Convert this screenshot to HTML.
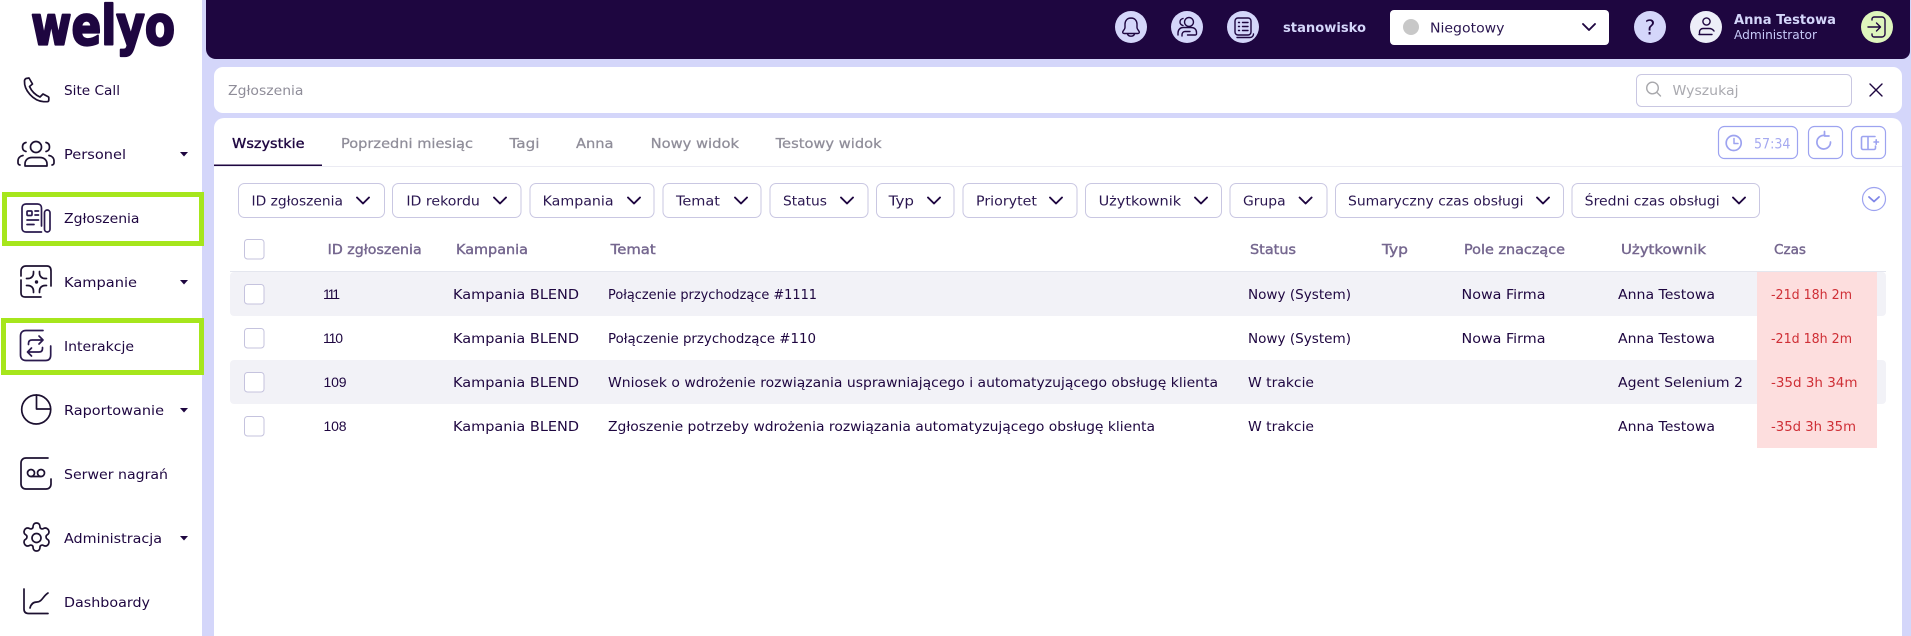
<!DOCTYPE html>
<html lang="pl"><head><meta charset="utf-8"><title>Zgłoszenia</title>
<style>
html,body{margin:0;padding:0;background:#d4d6fa;width:1911px;height:636px;overflow:hidden}
svg{display:block}
text{font-family:"DejaVu Sans","Liberation Sans",sans-serif;font-size:13.5px;fill:#1e0640}
.h{fill:#75678f;stroke:#75678f;stroke-width:.4}
.t{fill:#8f8d99;stroke:#8f8d99;stroke-width:.25}
.f{fill:#2a1650}
.n{fill:#1e0640}
.c{fill:#cf2f36}
.d{font-family:"Liberation Sans",sans-serif;font-size:14px}
.i{fill:none;stroke:#1c1030;stroke-width:1.7;stroke-linecap:round;stroke-linejoin:round}
.ti{fill:none;stroke:#1e0640;stroke-width:1.4;stroke-linecap:round;stroke-linejoin:round}
.chev{fill:none;stroke:#1e0640;stroke-width:1.9;stroke-linecap:round;stroke-linejoin:round}
.bl{fill:none;stroke:#9da3f0;stroke-width:1.3;stroke-linecap:round;stroke-linejoin:round}
.fb{fill:#fff;stroke:#c9c7e2;stroke-width:1}
.cb{fill:#fff;stroke:#c5c3de;stroke-width:1}
</style></head><body>
<svg width="1911" height="636" viewBox="0 0 1911 636" xmlns="http://www.w3.org/2000/svg">
<rect width="1911" height="636" fill="#d4d6fa"/>
<rect width="202" height="636" fill="#fff"/>

<!-- top bar -->
<path d="M206 0H1910V51a8 8 0 0 1-8 8H216a10 10 0 0 1-10-10Z" fill="#1e0640"/>
<circle cx="1131" cy="27" r="16" fill="#d4d6fa"/>
<path class="ti" d="M1131 18c-3.800 0-6 2.800-6 6.200v3.300c0 2-2 3-2.300 4.500-.1 1 .6 1.500 1.500 1.500h13.600c.9 0 1.600-.5 1.500-1.500-.3-1.500-2.300-2.500-2.300-4.500v-3.300c0-3.400-2.200-6.200-6-6.200Z"/>
<path class="ti" d="M1127.500 34c.5 1.500 2 2.200 3.500 2.200s3-.7 3.500-2.200"/>
<circle cx="1187" cy="27" r="16" fill="#d4d6fa"/>
<circle class="ti" cx="1189" cy="22" r="4.500"/>
<path class="ti" d="M1183 18.500c-2 .5-3 2-3 3.500s1 3 3 3.500M1178 35v-2c0-3 2-5.500 5-5.500h8c3.500 0 5.500 2 5.500 5v1.500c0 .5-.5 1-1 1h-8M1182 36v-1c0-2 1-3.500 3-3.500h5"/>
<circle cx="1243" cy="27" r="16" fill="#d4d6fa"/>
<rect class="ti" x="1235" y="18" width="16" height="17" rx="3"/>
<path class="ti" d="M1238.500 22.500h1M1242.500 22.500h5.500M1238.500 26.500h1M1242.500 26.500h5.500M1238.500 30.500h1M1242.500 30.500h5.500M1237 37.500h13c2 0 3.500-1.500 3.500-3.500"/>
<text x="1283" y="32" textLength="83" lengthAdjust="spacingAndGlyphs" font-weight="700" style="fill:#d4d6fa">stanowisko</text>
<rect x="1390" y="10" width="219" height="35" rx="4" fill="#fff"/>
<circle cx="1411" cy="27" r="8" fill="#c8c8c8"/>
<text x="1430" y="32.500" textLength="74.500" lengthAdjust="spacingAndGlyphs" style="font-size:13.500px;fill:#2a1650">Niegotowy</text>
<path class="chev" d="M1583 24l6 6 6-6"/>
<circle cx="1650" cy="27" r="16" fill="#d4d6fa"/>
<text x="1650" y="34.500" text-anchor="middle" style="font-size:20px;fill:#1e0640">?</text>
<circle cx="1706" cy="27" r="16" fill="#edeef8"/>
<circle class="ti" cx="1706.500" cy="21.500" r="3.600"/>
<path class="ti" d="M1699 34.500h13M1699.500 34v-2c0-2 1.500-3.500 3.500-3.500h6c2.500 0 4 1 5 2.500"/>
<text x="1734" y="24" textLength="102" lengthAdjust="spacingAndGlyphs" font-weight="700" style="fill:#d4d6fa">Anna Testowa</text>
<text x="1734" y="39" textLength="83" lengthAdjust="spacingAndGlyphs" style="font-size:12px;fill:#c7caf8">Administrator</text>
<circle cx="1877" cy="27" r="16" fill="#def5bd"/>
<path class="ti" d="M1872 20v-1c0-1 1-2 2-2h8c1.500 0 3 1.500 3 3v14c0 1.500-1.500 3-3 3h-8c-1 0-2-1-2-2v-1M1868 27h12M1876.500 23l4 4-4 4"/>

<!-- logo -->
<text x="31" y="44.500" textLength="144" lengthAdjust="spacingAndGlyphs" font-weight="700" style="font-size:54px;stroke:#1e0640;stroke-width:2.200;stroke-linejoin:round">welyo</text>

<!-- nav highlight -->
<rect x="4.500" y="194.500" width="197" height="49" fill="#fff" stroke="#a6e61c" stroke-width="5"/>
<rect x="3.500" y="320.500" width="198" height="52" fill="#fff" stroke="#a6e61c" stroke-width="5"/>

<!-- nav icons -->
<path class="i" d="M29 78l3.500 6-3 2.500c2 4.500 6 8.500 10.500 10.500l3-3 5 2.600c.8.400 1 1 .8 2v1.400c0 1-.6 1.700-1.700 1.700h-3.400C33 101 24 90 24.500 81c0-1 .6-2 1.500-2.500Z"/>
<circle class="i" cx="36" cy="147" r="5.500"/>
<path class="i" d="M26 142.500c-2.500.5-3.500 2.500-3.500 4.500s1 4 3.500 4.500M46 142.500c2.500.5 3.500 2.500 3.500 4.500s-1 4-3.500 4.500M25 166v-2c0-4 3-6.500 7-6.500h8c4 0 7 2.500 7 6.500v2h-22M18 163v-2c0-3 2-5 5-5.500M54 163v-2c0-3-2-5-5-5.500M18 163c0 1 1 2 2 2M54 163c0 1-1 2-2 2"/>
<g style="stroke:#2a1a4e" class="i"><path d="M41.500 226V208c0-2.500-1.500-4-4-4H26c-2.500 0-4 1.500-4 4v20c0 2.500 1.500 4 4 4h15.500"/><rect x="27" y="211" width="5" height="4.500" rx="1"/><path d="M35 211h3.500M35 215h3.500M27 220h11.500M27 224.500h7"/><rect x="44.500" y="210" width="5.500" height="22" rx="2.750"/></g>
<path class="i" d="M21 276v-5c0-3 2-5 5-5h21c3 0 4 2 4 5v15M51 284v-.5M21 280v13c0 3 1.500 4 4 4h16"/>
<path class="i" d="M33.500 271.500v1.500c0 3-2 5.500-5.500 5.500h-1.500M39.500 271.500v1.500c0 3 2 5.500 5.500 5.500h1.500M33.500 292.500V291c0-3-2-5.500-5.500-5.500h-1.500M39.500 292.500V291c0-3 2-5.500 5.500-5.500h1.500"/><circle cx="36.500" cy="282" r="1.700" fill="#1c1030"/>
<g style="stroke:#2a1a4e" class="i"><path d="M43 330.500H26c-3.500 0-5.500 2-5.500 5.500v19c0 3.500 2 5.500 5.500 5.500h19.500c3.500 0 5.200-2 5.200-5.500v-9"/><path d="M28.500 344.500v-1c0-2 1-3.500 3.500-3.500h11M39 336l4 4-4 4M42.500 347.500v1c0 2-1 3.500-3.500 3.500H27.500M31.500 348l-4 4 4 4"/></g>
<circle class="i" cx="36.200" cy="409.500" r="14.500"/><path class="i" d="M36.500 395V409H50.700"/>
<path class="i" d="M48 458H26c-3 0-5 2-5 5v21c0 3 2 5 5 5h20c3 0 5-2 5-5v-5"/>
<circle class="i" cx="31" cy="473" r="3.500"/><circle class="i" cx="41" cy="473" r="3.500"/><path class="i" d="M31 476.500h10"/>
<path class="i" d="M33 527c0-2 1-4 3.500-4s3.500 2 3.500 4c0 1.500 2 2.500 3.500 1.500 2-1 3.500-.5 5 1.500 1 2 .5 4-1.500 5-1.300.7-1.300 3 0 4 2 1 2.500 3 1.500 5-1 2-3 2.500-5 1.500-1.500-1-3.500 0-3.500 1.500 0 2-1 4-3.500 4s-3.500-2-3.500-4c0-1.500-2-2.500-3.500-1.500-2 1-4 .5-5-1.500-1-2-.5-4 1.500-5 1.300-1 1.300-3.300 0-4-2-1-2.500-3-1.500-5 1-2 3-2.500 5-1.500 1.500 1 3.500 0 3.500-1.500Z"/>
<circle class="i" cx="36.500" cy="538" r="4.500"/>
<path class="i" d="M24 589v20c0 3 1.500 4.500 4.500 4.500H48M30 608c1-4 3-6 7-6 5 0 6-6 11-9"/>

<!-- nav text -->
<text class="n" x="64" y="95" textLength="56" lengthAdjust="spacingAndGlyphs">Site Call</text>
<text class="n" x="64" y="159" textLength="62" lengthAdjust="spacingAndGlyphs">Personel</text>
<text class="n" x="64" y="223" textLength="75.500" lengthAdjust="spacingAndGlyphs">Zgłoszenia</text>
<text class="n" x="64" y="287" textLength="73" lengthAdjust="spacingAndGlyphs">Kampanie</text>
<text class="n" x="64" y="351" textLength="70" lengthAdjust="spacingAndGlyphs">Interakcje</text>
<text class="n" x="64" y="415" textLength="100" lengthAdjust="spacingAndGlyphs">Raportowanie</text>
<text class="n" x="64" y="479" textLength="104" lengthAdjust="spacingAndGlyphs">Serwer nagrań</text>
<text class="n" x="64" y="543" textLength="98" lengthAdjust="spacingAndGlyphs">Administracja</text>
<text class="n" x="64" y="607" textLength="86" lengthAdjust="spacingAndGlyphs">Dashboardy</text>
<g fill="#1e0640"><path d="M180 152h8l-4 4.500Z"/><path d="M180 280h8l-4 4.500Z"/><path d="M180 408h8l-4 4.500Z"/><path d="M180 536h8l-4 4.500Z"/></g>

<!-- search panel -->
<rect x="214" y="67" width="1688" height="46" rx="9" fill="#fff"/>
<text class="t" style="stroke:none" x="228" y="95" textLength="75.500" lengthAdjust="spacingAndGlyphs">Zgłoszenia</text>
<rect x="1636.500" y="74.500" width="215" height="32" rx="5" fill="#fff" stroke="#c9c7e2"/>
<circle cx="1652.500" cy="88" r="5.800" fill="none" stroke="#a8a8ac" stroke-width="1.400"/><path d="M1657 92.500l3.500 3.500" stroke="#a8a8ac" stroke-width="1.400" stroke-linecap="round"/>
<text x="1672.500" y="95" textLength="66" lengthAdjust="spacingAndGlyphs" style="fill:#aaaab0">Wyszukaj</text>
<path d="M1870 84l12 12M1882 84l-12 12" stroke="#1e0640" stroke-width="1.400" stroke-linecap="round"/>

<!-- main panel -->
<path d="M214 636V128a10 10 0 0 1 10-10H1892a10 10 0 0 1 10 10V636Z" fill="#fff"/>
<rect x="214" y="166" width="1688" height="1" fill="#ebebf3"/>
<rect x="214" y="164.500" width="108" height="1.500" fill="#1e0640"/>
<text x="232" y="148" textLength="72.600" lengthAdjust="spacingAndGlyphs" style="stroke:#1e0640;stroke-width:.35">Wszystkie</text>
<text class="t" x="341" y="148" textLength="132" lengthAdjust="spacingAndGlyphs">Poprzedni miesiąc</text>
<text class="t" x="509.500" y="148" textLength="30" lengthAdjust="spacingAndGlyphs">Tagi</text>
<text class="t" x="576" y="148" textLength="37.500" lengthAdjust="spacingAndGlyphs">Anna</text>
<text class="t" x="650.600" y="148" textLength="88.400" lengthAdjust="spacingAndGlyphs">Nowy widok</text>
<text class="t" x="775.600" y="148" textLength="106" lengthAdjust="spacingAndGlyphs">Testowy widok</text>

<!-- top right buttons -->
<rect x="1718.500" y="126.500" width="79" height="32" rx="6" fill="#fff" stroke="#9da3f0" stroke-width="1.200"/>
<circle class="bl" style="stroke-width:1.700" cx="1733.700" cy="143" r="7.500"/><path class="bl" style="stroke-width:1.500" d="M1734 138.500v5h4"/>
<text x="1754" y="148.500" textLength="36.500" lengthAdjust="spacingAndGlyphs" style="fill:#a5a9f0;font-size:14px">57:34</text>
<rect x="1808.500" y="126.500" width="34" height="32" rx="6" fill="#fff" stroke="#9da3f0" stroke-width="1.200"/>
<path class="bl" style="stroke-width:1.700" d="M1830.500 142a6.800 6.800 0 1 1-5.500-6.500M1824.500 131.500v4.500h4.500"/>
<rect x="1851.500" y="126.500" width="34" height="32" rx="6" fill="#fff" stroke="#9da3f0" stroke-width="1.200"/>
<path class="bl" style="stroke-width:1.600" d="M1875 136.500h-12a1.500 1.500 0 0 0-1.500 1.500v10a1.500 1.500 0 0 0 1.500 1.500h11a1.500 1.500 0 0 0 1.500-1.500v-2M1868 136.500v13M1874 142h4.500M1876.200 139.800v4.400"/>

<!-- filters -->
<rect class="fb" x="238.500" y="183.500" width="146" height="34" rx="6"/>
<rect class="fb" x="392.500" y="183.500" width="128.500" height="34" rx="6"/>
<rect class="fb" x="530" y="183.500" width="124" height="34" rx="6"/>
<rect class="fb" x="663" y="183.500" width="98" height="34" rx="6"/>
<rect class="fb" x="770" y="183.500" width="98" height="34" rx="6"/>
<rect class="fb" x="876.500" y="183.500" width="77.500" height="34" rx="6"/>
<rect class="fb" x="963" y="183.500" width="114" height="34" rx="6"/>
<rect class="fb" x="1085.500" y="183.500" width="136" height="34" rx="6"/>
<rect class="fb" x="1230" y="183.500" width="97" height="34" rx="6"/>
<rect class="fb" x="1335.500" y="183.500" width="228" height="34" rx="6"/>
<rect class="fb" x="1572" y="183.500" width="187.500" height="34" rx="6"/>
<text class="f" x="251.500" y="205.500" textLength="91.500" lengthAdjust="spacingAndGlyphs">ID zgłoszenia</text>
<text class="f" x="406.400" y="205.500" textLength="73.500" lengthAdjust="spacingAndGlyphs">ID rekordu</text>
<text class="f" x="542.600" y="205.500" textLength="71" lengthAdjust="spacingAndGlyphs">Kampania</text>
<text class="f" x="676" y="205.500" textLength="44" lengthAdjust="spacingAndGlyphs">Temat</text>
<text class="f" x="783" y="205.500" textLength="44" lengthAdjust="spacingAndGlyphs">Status</text>
<text class="f" x="888.600" y="205.500" textLength="25.400" lengthAdjust="spacingAndGlyphs">Typ</text>
<text class="f" x="976" y="205.500" textLength="61" lengthAdjust="spacingAndGlyphs">Priorytet</text>
<text class="f" x="1098.600" y="205.500" textLength="82.500" lengthAdjust="spacingAndGlyphs">Użytkownik</text>
<text class="f" x="1243" y="205.500" textLength="42.600" lengthAdjust="spacingAndGlyphs">Grupa</text>
<text class="f" x="1348" y="205.500" textLength="175.500" lengthAdjust="spacingAndGlyphs">Sumaryczny czas obsługi</text>
<text class="f" x="1584.700" y="205.500" textLength="135" lengthAdjust="spacingAndGlyphs">Średni czas obsługi</text>
<path class="chev" d="M357 197.500l6 6 6-6M494 197.500l6 6 6-6M628 197.500l6 6 6-6M735 197.500l6 6 6-6M841 197.500l6 6 6-6M928 197.500l6 6 6-6M1050 197.500l6 6 6-6M1195 197.500l6 6 6-6M1299.600 197.500l6 6 6-6M1537 197.500l6 6 6-6M1733 197.500l6 6 6-6"/>
<circle cx="1874" cy="199" r="11.500" fill="#fff" stroke="#9da3f0" stroke-width="1.200"/>
<path d="M1869 197l5 4.500 5-4.500" fill="none" stroke="#7f86e8" stroke-width="1.800" stroke-linecap="round" stroke-linejoin="round"/>

<!-- table header -->
<rect class="cb" x="244.500" y="239.500" width="19.500" height="19.500" rx="3"/>
<text class="h" x="327.700" y="254" textLength="94" lengthAdjust="spacingAndGlyphs">ID zgłoszenia</text>
<text class="h" x="456" y="254" textLength="72" lengthAdjust="spacingAndGlyphs">Kampania</text>
<text class="h" x="610.700" y="254" textLength="45" lengthAdjust="spacingAndGlyphs">Temat</text>
<text class="h" x="1250" y="254" textLength="46" lengthAdjust="spacingAndGlyphs">Status</text>
<text class="h" x="1382" y="254" textLength="26" lengthAdjust="spacingAndGlyphs">Typ</text>
<text class="h" x="1464" y="254" textLength="101" lengthAdjust="spacingAndGlyphs">Pole znaczące</text>
<text class="h" x="1621" y="254" textLength="85" lengthAdjust="spacingAndGlyphs">Użytkownik</text>
<text class="h" x="1774" y="254" textLength="32" lengthAdjust="spacingAndGlyphs">Czas</text>
<rect x="230" y="271" width="1656" height="1" fill="#e4e6ee"/>

<!-- rows -->
<rect x="230" y="272" width="1656" height="44" rx="4" fill="#f2f2f7"/>
<rect x="230" y="360" width="1656" height="44" rx="4" fill="#f2f2f7"/>
<rect x="1757" y="272" width="120" height="176" fill="#fddede"/>
<rect class="cb" x="244.500" y="284.500" width="19.500" height="19.500" rx="3"/>
<rect class="cb" x="244.500" y="328.500" width="19.500" height="19.500" rx="3"/>
<rect class="cb" x="244.500" y="372.500" width="19.500" height="19.500" rx="3"/>
<rect class="cb" x="244.500" y="416.500" width="19.500" height="19.500" rx="3"/>

<text class="d" x="323" y="299" textLength="17" lengthAdjust="spacing">111</text>
<text x="453" y="299" textLength="126" lengthAdjust="spacingAndGlyphs">Kampania BLEND</text>
<text x="608" y="299" textLength="209" lengthAdjust="spacingAndGlyphs">Połączenie przychodzące #1111</text>
<text x="1248" y="299" textLength="103" lengthAdjust="spacingAndGlyphs">Nowy (System)</text>
<text x="1461.500" y="299" textLength="84" lengthAdjust="spacingAndGlyphs">Nowa Firma</text>
<text x="1618" y="299" textLength="97" lengthAdjust="spacingAndGlyphs">Anna Testowa</text>
<text class="c" x="1771" y="299" textLength="81" lengthAdjust="spacingAndGlyphs">-21d 18h 2m</text>

<text class="d" x="323" y="343" textLength="20" lengthAdjust="spacing">110</text>
<text x="453" y="343" textLength="126" lengthAdjust="spacingAndGlyphs">Kampania BLEND</text>
<text x="608" y="343" textLength="208" lengthAdjust="spacingAndGlyphs">Połączenie przychodzące #110</text>
<text x="1248" y="343" textLength="103" lengthAdjust="spacingAndGlyphs">Nowy (System)</text>
<text x="1461.500" y="343" textLength="84" lengthAdjust="spacingAndGlyphs">Nowa Firma</text>
<text x="1618" y="343" textLength="97" lengthAdjust="spacingAndGlyphs">Anna Testowa</text>
<text class="c" x="1771" y="343" textLength="81" lengthAdjust="spacingAndGlyphs">-21d 18h 2m</text>

<text class="d" x="323.500" y="387" textLength="23" lengthAdjust="spacing">109</text>
<text x="453" y="387" textLength="126" lengthAdjust="spacingAndGlyphs">Kampania BLEND</text>
<text x="608" y="387" textLength="610" lengthAdjust="spacingAndGlyphs">Wniosek o wdrożenie rozwiązania usprawniającego i automatyzującego obsługę klienta</text>
<text x="1248" y="387" textLength="66" lengthAdjust="spacingAndGlyphs">W trakcie</text>
<text x="1618" y="387" textLength="125" lengthAdjust="spacingAndGlyphs">Agent Selenium 2</text>
<text class="c" x="1771" y="387" textLength="86.500" lengthAdjust="spacingAndGlyphs">-35d 3h 34m</text>

<text class="d" x="323.500" y="431" textLength="23" lengthAdjust="spacing">108</text>
<text x="453" y="431" textLength="126" lengthAdjust="spacingAndGlyphs">Kampania BLEND</text>
<text x="608" y="431" textLength="547" lengthAdjust="spacingAndGlyphs">Zgłoszenie potrzeby wdrożenia rozwiązania automatyzującego obsługę klienta</text>
<text x="1248" y="431" textLength="66" lengthAdjust="spacingAndGlyphs">W trakcie</text>
<text x="1618" y="431" textLength="97" lengthAdjust="spacingAndGlyphs">Anna Testowa</text>
<text class="c" x="1771" y="431" textLength="85" lengthAdjust="spacingAndGlyphs">-35d 3h 35m</text>
</svg>
</body></html>
